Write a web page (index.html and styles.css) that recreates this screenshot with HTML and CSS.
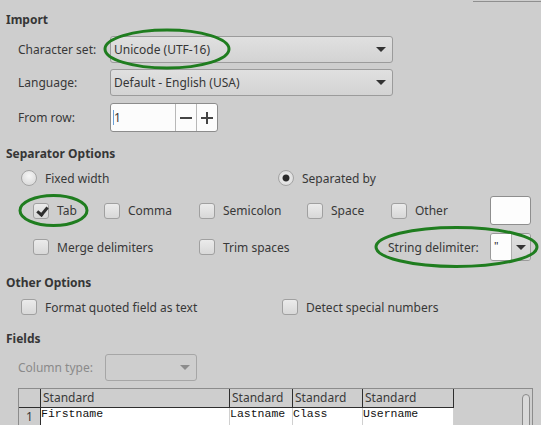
FILE: index.html
```html
<!DOCTYPE html>
<html>
<head>
<meta charset="utf-8">
<link rel="stylesheet" href="styles.css">
</head>
<body>
<div class="dialog">
  <div class="topline"></div>

  <div class="heading h-import">Import</div>
  <div class="form-row r-charset">
    <span class="label">Character set:</span>
    <div class="combo w-wide"><span class="combo-text">Unicode (UTF-16)</span><span class="arrow"></span></div>
  </div>
  <div class="form-row r-lang">
    <span class="label">Language:</span>
    <div class="combo w-wide"><span class="combo-text">Default - English (USA)</span><span class="arrow"></span></div>
  </div>
  <div class="form-row r-from">
    <span class="label">From row:</span>
    <div class="spin">
      <span class="spin-field"><span class="caret">1</span></span>
      <span class="spin-btn minus"></span>
      <span class="spin-btn plus"></span>
    </div>
  </div>

  <div class="heading h-sep">Separator Options</div>
  <div class="opt-row r-radio">
    <label class="opt w-fixed"><span class="radio"></span>Fixed width</label>
    <label class="opt"><span class="radio on"></span>Separated by</label>
  </div>
  <div class="opt-row r-checks">
    <label class="opt w-tab"><span class="check on"></span>Tab</label>
    <label class="opt w-comma"><span class="check"></span>Comma</label>
    <label class="opt w-semi"><span class="check"></span>Semicolon</label>
    <label class="opt w-space"><span class="check"></span>Space</label>
    <label class="opt w-other"><span class="check"></span>Other</label>
    <span class="other-field"></span>
  </div>
  <div class="opt-row r-merge">
    <label class="opt w-merge"><span class="check"></span>Merge delimiters</label>
    <label class="opt w-trim"><span class="check"></span>Trim spaces</label>
    <span class="delim-label">String delimiter:</span>
    <div class="delim-combo"><span class="delim-field">"</span><span class="delim-btn"><span class="arrow"></span></span></div>
  </div>

  <div class="heading h-other">Other Options</div>
  <div class="opt-row r-otheropts">
    <label class="opt w-quoted"><span class="check"></span>Format quoted field as text</label>
    <label class="opt"><span class="check"></span>Detect special numbers</label>
  </div>

  <div class="heading h-fields">Fields</div>
  <div class="form-row r-coltype">
    <span class="label disabled">Column type:</span>
    <div class="combo w-narrow disabled-combo"><span class="combo-text"></span><span class="arrow light"></span></div>
  </div>

  <div class="table-wrap">
    <div class="grid">
      <div class="hcell c0"></div>
      <div class="hcell c1">Standard</div>
      <div class="hcell c2">Standard</div>
      <div class="hcell c3">Standard</div>
      <div class="hcell c4">Standard</div>
      <div class="hcell c5"></div>

      <div class="rnum">1</div>
      <div class="dcell">Firstname</div>
      <div class="dcell">Lastname</div>
      <div class="dcell">Class</div>
      <div class="dcell">Username</div>
      <div class="dcell empty"></div>

      <div class="rnum">2</div>
      <div class="dcell">John</div>
      <div class="dcell">Student</div>
      <div class="dcell">Example</div>
      <div class="dcell">jstudent</div>
      <div class="dcell empty"></div>
    </div>
    <div class="scrollbar"></div>
  </div>

  <svg class="marks" width="541" height="425" viewBox="0 0 541 425">
    <ellipse cx="167" cy="49" rx="62" ry="19" />
    <ellipse cx="53.5" cy="210.5" rx="33.5" ry="15" />
    <ellipse cx="456.5" cy="247" rx="80.5" ry="19.5" />
  </svg>
</div>
</body>
</html>
```

FILE: styles.css
```css
html, body {
  margin: 0;
  padding: 0;
}
body {
  background: #cecece;
  font-family: "Noto Sans", "DejaVu Sans", sans-serif;
  font-size: 12px;
  color: #383838;
  width: 541px;
  height: 425px;
  overflow: hidden;
}
.dialog {
  position: relative;
  width: 541px;
  height: 425px;
  overflow: hidden;
}
.topline {
  height: 1px;
  margin-left: 473px;
  border-bottom: 1px solid #8f8f8f;
}

.heading {
  font-weight: bold;
  height: 16px;
  line-height: 16px;
  padding-left: 6px;
  color: #363636;
}
.h-import { margin-top: 10px; }
.h-sep { margin-top: 14px; }
.h-other { margin-top: 14px; }
.h-fields { margin-top: 15px; }

.form-row {
  display: flex;
  align-items: center;
  padding-left: 18px;
}
.form-row .label { width: 92px; }
.r-charset { margin-top: 8px; height: 27px; }
.r-lang { margin-top: 6px; height: 27px; }
.r-from { margin-top: 7px; height: 29px; }
.r-coltype { margin-top: 7px; height: 27px; }
.r-coltype .label { width: 87px; }
.label.disabled { color: #8a8a8a; }

.combo {
  box-sizing: border-box;
  height: 27px;
  border: 1px solid #9b9b9b;
  border-radius: 3px;
  background: linear-gradient(#e0e0e0, #d3d3d3);
  display: flex;
  align-items: center;
  padding-left: 3px;
  padding-right: 6px;
}
.w-wide { width: 283px; }
.w-narrow { width: 92px; }
.combo-text { flex: 1; color: #363636; }
.disabled-combo {
  background: #cecece;
  border-color: #a6a6a6;
}
.arrow {
  width: 0;
  height: 0;
  border-left: 5px solid transparent;
  border-right: 5px solid transparent;
  border-top: 5px solid #333;
}
.arrow.light { border-top-color: #8c8c8c; }

.spin {
  box-sizing: border-box;
  width: 108px;
  height: 29px;
  border: 1px solid #8c8c8c;
  border-radius: 3px;
  background: #fcfcfc;
  display: flex;
}
.spin-field {
  flex: 1;
  display: flex;
  align-items: center;
  padding-left: 2px;
  border-right: 1px solid #b8b8b8;
}
.caret { border-left: 1px solid #6aa0d8; line-height: 15px; }
.spin-btn {
  width: 20px;
  position: relative;
}
.spin-btn.minus { border-right: 1px solid #b8b8b8; }
.spin-btn::before {
  content: "";
  position: absolute;
  left: 4px;
  top: 13px;
  width: 12px;
  height: 2px;
  background: #444;
}
.spin-btn.plus::after {
  content: "";
  position: absolute;
  left: 9px;
  top: 8px;
  width: 2px;
  height: 12px;
  background: #444;
}

.opt-row {
  display: flex;
  align-items: center;
}
.r-radio { margin-top: 7px; height: 18px; padding-left: 21px; }
.r-checks { margin-top: 9px; height: 29px; padding-left: 33px; }
.r-merge { margin-top: 8px; height: 28px; padding-left: 33px; }
.r-otheropts { margin-top: 7px; height: 18px; padding-left: 21px; }

.opt {
  display: flex;
  align-items: center;
  gap: 8px;
  white-space: nowrap;
}
.w-fixed { width: 257px; }
.w-tab { width: 71px; }
.w-comma { width: 95px; }
.w-semi { width: 108px; }
.w-space { width: 84px; }
.w-other { width: 99px; }
.w-merge { width: 166px; }
.w-trim { width: 189px; }
.w-quoted { width: 261px; }

.radio {
  box-sizing: border-box;
  width: 16px;
  height: 16px;
  border-radius: 50%;
  border: 1px solid #a4a4a4;
  background: radial-gradient(circle at 50% 35%, #f6f6f6, #dedede 70%);
  position: relative;
}
.radio.on::after {
  content: "";
  position: absolute;
  left: 4px;
  top: 4px;
  width: 6px;
  height: 6px;
  border-radius: 50%;
  background: #2a2a2a;
}
.radio.on {
  background: radial-gradient(circle, #3a3a3a 0 3px, #e8e8e8 4px, #d2d2d2 100%);
}
.check {
  box-sizing: border-box;
  width: 16px;
  height: 16px;
  border: 1px solid #a0a0a0;
  border-radius: 3px;
  background: linear-gradient(#ebebeb, #d8d8d8);
  position: relative;
}
.check.on::after {
  content: "";
  position: absolute;
  left: 5px;
  top: 1px;
  width: 4px;
  height: 8px;
  border-right: 3px solid #2e2e2e;
  border-bottom: 3px solid #2e2e2e;
  transform: rotate(40deg);
}
.other-field {
  box-sizing: border-box;
  width: 41px;
  height: 29px;
  border: 1px solid #8e8e8e;
  border-radius: 3px;
  background: #fdfdfd;
}
.delim-label { width: 102px; }
.delim-combo {
  box-sizing: border-box;
  width: 41px;
  height: 28px;
  border: 1px solid #9a9a9a;
  border-radius: 3px;
  display: flex;
  overflow: hidden;
}
.delim-field {
  width: 21px;
  background: #fdfdfd;
  border-right: 1px solid #b0b0b0;
  padding-left: 3px;
  box-sizing: border-box;
  font-size: 11px;
  line-height: 24px;
  color: #222;
}
.delim-btn {
  flex: 1;
  background: linear-gradient(#e0e0e0, #d3d3d3);
  display: flex;
  align-items: center;
  justify-content: center;
}

.table-wrap {
  margin-top: 7px;
  margin-left: 18px;
  width: 515px;
  height: 60px;
  box-sizing: border-box;
  border: 1px solid #8c8c8c;
  border-bottom: none;
  position: relative;
}
.grid {
  display: grid;
  grid-template-columns: 22px 189px 63px 70px 91px 1fr;
  grid-template-rows: 19px 19px 19px;
}
.hcell {
  border-right: 1px solid #2e2e2e;
  border-bottom: 1px solid #2e2e2e;
  padding-left: 2px;
  font-size: 12px;
  line-height: 18px;
  color: #3a3a3a;
  white-space: nowrap;
  overflow: hidden;
}
.hcell.c5 { border: none; }
.rnum {
  border-right: 1px solid #2e2e2e;
  border-bottom: 1px solid #9a9a9a;
  text-align: center;
  font-size: 12px;
  line-height: 17px;
}
.dcell {
  background: #fff;
  border-right: 1px solid #d0d0d0;
  border-bottom: 1px solid #c8c8c8;
  font-family: "Liberation Mono", "DejaVu Sans Mono", monospace;
  font-size: 11.5px;
  line-height: 12px;
  color: #111;
  white-space: nowrap;
  overflow: hidden;
}
.dcell.empty { background: transparent; border: none; }
.scrollbar {
  position: absolute;
  left: 503px;
  top: 5px;
  width: 8px;
  height: 60px;
  box-sizing: border-box;
  border: 1px solid #8a8a8a;
  border-radius: 4px;
  background: #dadada;
}

.marks {
  position: absolute;
  left: 0;
  top: 0;
  pointer-events: none;
}
.marks ellipse {
  fill: none;
  stroke: #1f7d1f;
  stroke-width: 3;
}
```
